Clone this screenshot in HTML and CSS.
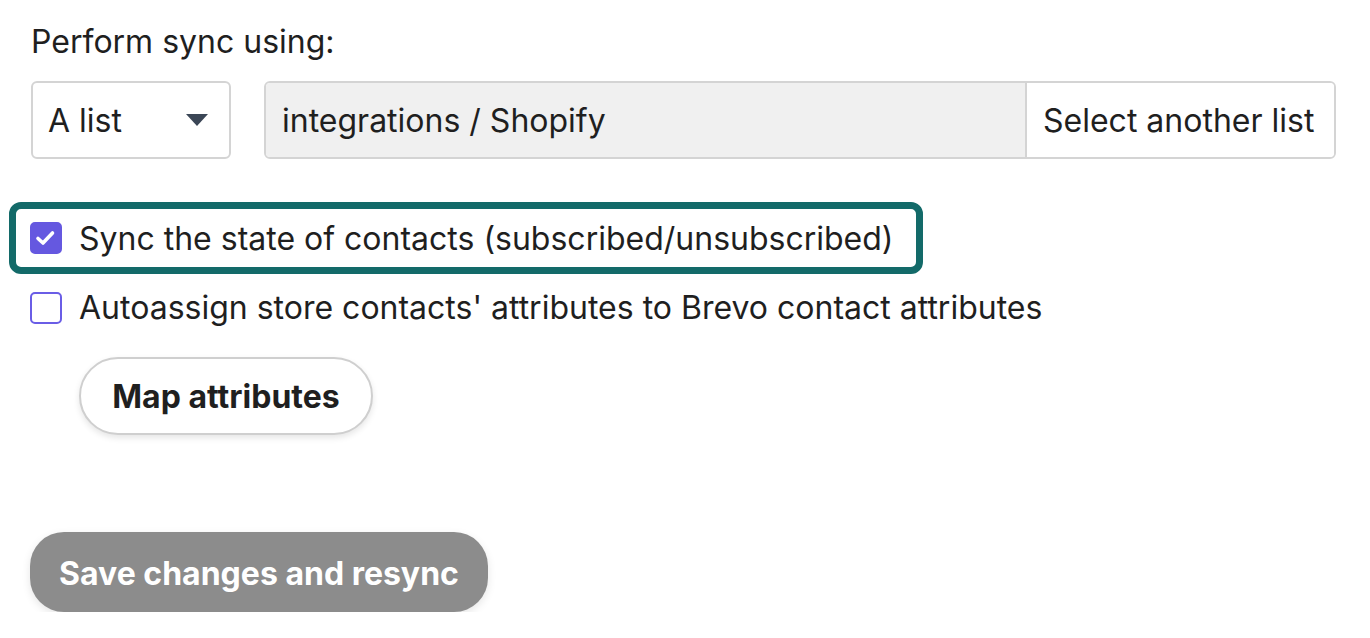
FILE: index.html
```html
<!DOCTYPE html>
<html>
<head>
<meta charset="utf-8">
<link rel="stylesheet" href="styles.css">
</head>
<body>
<div class="page">
  <div class="label">Perform sync using:</div>
  <div class="row">
    <div class="select">
      <span>A list</span>
      <svg class="caret" width="22" height="12" viewBox="0 0 22 12"><path d="M0 0 H22 L11 12 Z" fill="#3b4656"/></svg>
    </div>
    <div class="group">
      <div class="field">integrations / Shopify</div>
      <div class="addon">Select another list</div>
    </div>
  </div>
  <div class="highlight">
    <div class="check checked">
      <svg width="28" height="28" viewBox="0 0 28 28"><path d="M6 14.5 L11 19 L20.5 9" fill="none" stroke="#fff" stroke-width="3.6" stroke-linecap="round" stroke-linejoin="round"/></svg>
    </div>
    <span class="ctext">Sync the state of contacts (subscribed/unsubscribed)</span>
  </div>
  <div class="option">
    <div class="check"></div>
    <span class="ctext">Autoassign store contacts' attributes to Brevo contact attributes</span>
  </div>
  <div class="mapwrap">
    <button class="btn-map">Map attributes</button>
  </div>
  <button class="btn-save">Save changes and resync</button>
</div>
</body>
</html>
```
FILE: styles.css
```css
* { box-sizing: border-box; }
html, body { margin: 0; padding: 0; background: #fff; }
body {
  font-family: Inter, "Noto Sans", sans-serif;
  color: #1f1f1f;
  font-size: 32px;
}
.page {
  padding: 22px 34px 0 31px;
  width: 1370px;
}
.label {
  line-height: 40px;
  height: 40px;
  margin-bottom: 19px;
}
.row {
  display: flex;
  gap: 33px;
  height: 78px;
}
.select {
  width: 200px;
  height: 78px;
  border: 2px solid #d4d4d4;
  border-radius: 6px;
  display: flex;
  align-items: center;
  justify-content: space-between;
  padding: 0 21px 0 15px;
}
.group {
  flex: 1;
  display: flex;
  border: 2px solid #d4d4d4;
  border-radius: 6px;
  overflow: hidden;
}
.field {
  flex: 1;
  background: #f0f0f0;
  display: flex;
  align-items: center;
  padding-left: 16px;
}
.addon {
  width: 309px;
  border-left: 2px solid #d4d4d4;
  display: flex;
  align-items: center;
  padding-left: 16px;
  background: #fff;
}
.highlight {
  margin-top: 43px;
  margin-left: -22px;
  width: 914px;
  height: 72px;
  border: 7px solid #136a69;
  border-radius: 12px;
  display: flex;
  align-items: center;
  padding: 2px 0 0 14px;
  gap: 17px;
}
.option {
  margin-top: 16px;
  height: 36px;
  display: flex;
  align-items: center;
  gap: 17px;
  margin-left: -1px;
}
.check {
  width: 32px;
  height: 32px;
  flex: none;
  border: 2px solid #6a5de6;
  border-radius: 5px;
  display: flex;
  align-items: center;
  justify-content: center;
  background: #fff;
}
.highlight .check { margin-top: -2px; }
.check.checked {
  background: #6558e0;
  border-color: #6558e0;
}
.ctext { line-height: 36px; }
.mapwrap {
  margin-top: 31px;
  padding-left: 48px;
}
.btn-map {
  font-family: Inter, "Noto Sans", sans-serif;
  font-size: 32px;
  font-weight: 700;
  color: #1f1f1f;
  background: #fff;
  border: 2px solid #cfcfcf;
  border-radius: 40px;
  height: 78px;
  width: 294px;
  padding: 0;
  box-shadow: 0 3px 6px rgba(0,0,0,0.10);
  cursor: pointer;
}
.btn-save {
  display: block;
  margin-top: 97px;
  margin-left: -1px;
  font-family: Inter, "Noto Sans", sans-serif;
  font-size: 32px;
  font-weight: 700;
  color: #fff;
  background: #8c8c8c;
  border: none;
  border-radius: 34px;
  height: 80px;
  width: 458px;
  padding: 2px 0 0;
  box-shadow: 0 3px 8px rgba(0,0,0,0.10);
}
```
